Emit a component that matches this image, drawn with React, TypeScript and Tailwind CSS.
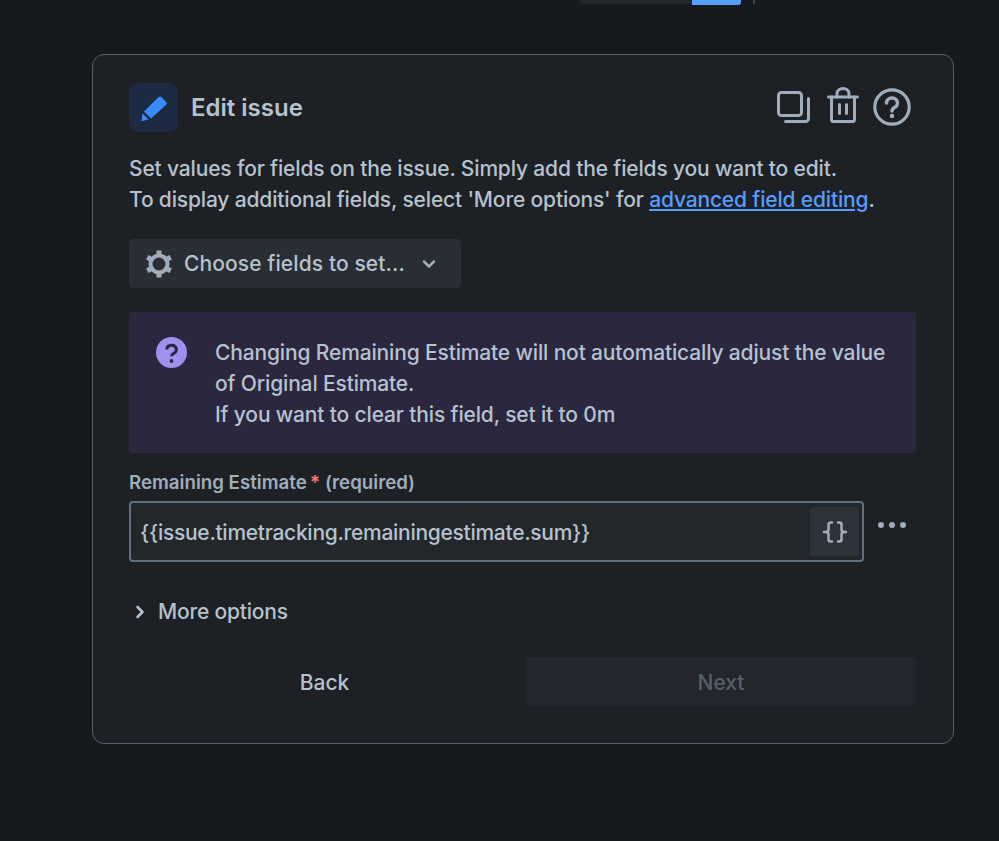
export default function App() {
  return (
    <div className="h-[841px] w-[999px] overflow-hidden bg-[#161a1d] font-['Inter',sans-serif] text-[#b6c2cf]">
      {/* bottom edge of the toolbar above, scrolled off */}
      <div className="flex h-[5px] items-start pl-[580px]">
        <div className="h-[4px] w-[112px] rounded-bl-[3px] bg-[#22272b]" />
        <div className="h-[5px] w-[49px] rounded-br-[3px] bg-[#579dff]" />
        <div className="ml-[12px] h-[4px] w-[2px] bg-[#38414a]" />
      </div>

      <div className="ml-[92px] mt-[49px] h-[690px] w-[862px] rounded-[12px] border border-[#566069] bg-[#1d2125] px-[36px] pt-[28px]">
        <div className="flex h-[50px] items-center">
          <div className="mb-[1px] flex h-[49px] w-[49px] items-center justify-center rounded-[9px] bg-[#1c2b41]">
            <svg width="28" height="28" viewBox="0 0 28 28" fill="#388bff">
              <path d="M18.600 3.100a2 2 0 0 1 2.800 0l4.800 4.800a2 2 0 0 1 0 2.800L11 24.500 4 17.500z" />
              <path d="M2.600 19.500l5.900 6-6.400 1.500a.5.500 0 0 1-.6-.6z" />
            </svg>
          </div>
          <h2 className="ml-[13px] text-[24px] font-semibold text-[#b6c2cf]">Edit issue</h2>
          <div className="mb-[4px] ml-auto flex h-[40px] items-start pr-[6px]">
            <svg width="34" height="40" viewBox="0 0 34 40" fill="none" stroke="#9fadbc" strokeWidth="3" strokeLinecap="round" strokeLinejoin="round">
              <rect x="1.500" y="6.500" width="23" height="23" rx="3" />
              <path d="M8.500 35.500H28.500a3 3 0 0 0 3-3V12.500" />
            </svg>
            <svg className="ml-[16px]" width="32" height="40" viewBox="0 0 32 40" fill="none" stroke="#9fadbc" strokeWidth="3" strokeLinecap="round" strokeLinejoin="round">
              <path d="M1.500 11H30.500" />
              <path d="M10 11V7.500a6 5 0 0 1 12 0V11" />
              <path d="M4.500 11V33.500a2 2 0 0 0 2 2H25.500a2 2 0 0 0 2-2V11" />
              <path d="M12.500 18.500v9M19.500 18.500v9" />
            </svg>
            <svg className="ml-[14px]" width="38" height="40" viewBox="0 0 38 40" fill="none" stroke="#9fadbc" strokeLinecap="round">
              <circle cx="19" cy="21" r="17.200" strokeWidth="3.200" />
              <path d="M13.500 17a5.500 5 0 1 1 8 4.500c-1.700 1-2.500 1.800-2.500 3.500" strokeWidth="3.500" />
              <circle cx="19" cy="30" r="1.500" fill="#9fadbc" strokeWidth="1.500" />
            </svg>
          </div>
        </div>

        <p className="mt-[20px] text-[21px] font-[450] leading-[31px] tracking-[-0.16px]">
          Set values for fields on the issue. Simply add the fields you want to edit.
          <br />
          To display additional fields, select 'More options' for{" "}
          <a className="text-[#579dff] underline">advanced field editing</a>.
        </p>

        <button className="mt-[24px] flex h-[49px] w-[332px] items-center rounded-[4px] bg-[#282e33] pl-[16px] text-[21px] font-medium tracking-[0.1px] text-[#b6c2cf]">
          <svg width="28" height="28" viewBox="0 0 28 28" fill="none" stroke="#9fadbc">
            <circle cx="14" cy="14" r="8.500" strokeWidth="4" />
            <path d="M14 .5V4M14 24v3.500M2.300 7.250l3.040 1.750M25.700 20.750l-3.040-1.750M2.300 20.750l3.040-1.750M25.700 7.250l-3.040 1.750" strokeWidth="5" />
          </svg>
          <span className="ml-[11px] pt-[1px]">Choose fields to set...</span>
          <svg className="ml-[17px]" width="14" height="10" viewBox="0 0 14 10" fill="none" stroke="#9fadbc" strokeWidth="2.500" strokeLinecap="round" strokeLinejoin="round">
            <path d="M2 2.500l5 5 5-5" />
          </svg>
        </button>

        <div className="mt-[24px] flex h-[141px] w-[787px] rounded-[4px] bg-[#2b273f] pl-[27px] pt-[25px]">
          <svg className="shrink-0" width="31" height="31" viewBox="0 0 31 31">
            <circle cx="15.500" cy="15.500" r="15.500" fill="#9f8fef" />
            <path d="M10.800 12.500a4.800 4.300 0 1 1 7 3.800c-1.500.9-2.300 1.500-2.300 3" fill="none" stroke="#2b273f" strokeWidth="3" />
            <circle cx="15.500" cy="24" r="1.900" fill="#2b273f" />
          </svg>
          <p className="ml-[28px] text-[21px] font-[450] leading-[31px] tracking-[-0.15px]">
            Changing Remaining Estimate will not automatically adjust the value
            <br />
            of Original Estimate.
            <br />
            If you want to clear this field, set it to 0m
          </p>
        </div>

        <div className="mt-[18px] text-[18.700px] font-semibold leading-[24px] text-[#9fadbc]">
          Remaining Estimate<span className="ml-[3px] font-bold text-[#f87168]">*</span>{" "}
          <span>(required)</span>
        </div>

        <div className="mt-[6px] flex">
          <div className="flex h-[61px] w-[735px] items-center justify-between rounded-[4px] border-2 border-[#5f7082] bg-[#22272b] pl-[9px] pr-[3px] text-[21px] font-[450] tracking-[-0.28px]">
            <span className="pt-[2px]">{"{{issue.timetracking.remainingestimate.sum}}"}</span>
            <div className="flex h-[49px] w-[49px] items-center justify-center rounded-[4px] bg-[#2c333a]">
              <svg width="26" height="22" viewBox="0 0 26 22" fill="none" stroke="#9fadbc" strokeWidth="2.500" strokeLinecap="round" strokeLinejoin="round">
                <path d="M10 1.500H8.500a2 2 0 0 0-2 2V9c0 1.200-1.500 2-4.500 2 3 0 4.500.8 4.500 2v5.500a2 2 0 0 0 2 2H10" />
                <path d="M16 1.500h1.500a2 2 0 0 1 2 2V9c0 1.200 1.500 2 4.500 2-3 0-4.500.8-4.500 2v5.500a2 2 0 0 1-2 2H16" />
              </svg>
            </div>
          </div>
          <div className="ml-[14px] mt-[21px] flex h-[6px] gap-[5px]">
            <span className="h-[6px] w-[6px] rounded-full bg-[#9fadbc]" />
            <span className="h-[6px] w-[6px] rounded-full bg-[#9fadbc]" />
            <span className="h-[6px] w-[6px] rounded-full bg-[#9fadbc]" />
          </div>
        </div>

        <div className="mt-[34px] flex h-[31px] items-center text-[21px] font-[450] tracking-[-0.2px]">
          <svg className="ml-[6px]" width="10" height="14" viewBox="0 0 10 14" fill="none" stroke="#b6c2cf" strokeWidth="2.500" strokeLinecap="round" strokeLinejoin="round">
            <path d="M2.500 2l5 5-5 5" />
          </svg>
          <span className="ml-[13px]">More options</span>
        </div>

        <div className="mt-[30px] flex justify-between text-[21px] font-medium">
          <button className="h-[49px] w-[391px] rounded-[4px] pt-[2px]">Back</button>
          <button className="mr-[1px] h-[49px] w-[390px] rounded-[4px] bg-[#23272d] pt-[2px] text-[#53606b]">Next</button>
        </div>
      </div>
    </div>
  );
}
